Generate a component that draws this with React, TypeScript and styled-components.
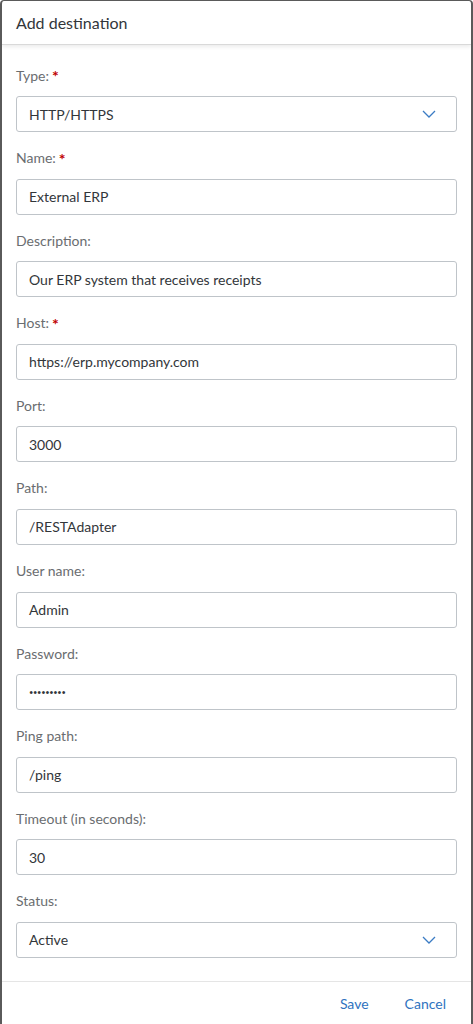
import React from 'react';
import styled, { createGlobalStyle } from 'styled-components';

const GlobalStyle = createGlobalStyle`
  html, body {
    margin: 0;
    padding: 0;
    background: #ffffff;
  }
  * {
    box-sizing: border-box;
  }
`;

const Dialog = styled.div`
  width: 473px;
  height: 1024px;
  display: flex;
  flex-direction: column;
  background: #ffffff;
  border-left: 2px solid #5a5a5a;
  border-right: 2px solid #5a5a5a;
  border-top: 1px solid #5a5a5a;
  border-radius: 4px 4px 0 0;
  font-family: Lato, "Noto Sans", sans-serif;
  color: #32363a;
  overflow: hidden;
`;

const Header = styled.div`
  height: 44px;
  flex: none;
  display: flex;
  align-items: center;
  padding: 0 14px;
  font-size: 16px;
  color: #32363a;
  border-bottom: 1px solid #d9d9d9;
  box-shadow: 0 2px 4px rgba(0, 0, 0, 0.08);
  position: relative;
  z-index: 1;
`;

const Content = styled.div`
  flex: 1;
  display: flex;
  flex-direction: column;
  gap: 14.6px;
  padding: 19px 14px 0;
`;

const Field = styled.div`
  display: flex;
  flex-direction: column;
  gap: 10px;
`;

const Label = styled.div`
  height: 22px;
  display: flex;
  align-items: center;
  font-size: 14px;
  color: #6a6d70;
`;

const Required = styled.span`
  color: #c00000;
  margin-left: 3px;
  font-size: 16px;
  font-weight: 700;
  line-height: 1;
  position: relative;
  top: 1px;
`;

const Input = styled.div`
  height: 36px;
  display: flex;
  align-items: center;
  justify-content: space-between;
  padding: 0 20px 0 12px;
  border: 1px solid #bfc4c9;
  border-radius: 3px;
  font-size: 14px;
  color: #32363a;
  background: #ffffff;
`;

const Dots = styled.span`
  font-size: 7.5px;
  letter-spacing: -0.3px;
  color: #32363a;
`;

const Footer = styled.div`
  height: 43px;
  flex: none;
  display: flex;
  align-items: center;
  justify-content: flex-end;
  gap: 36px;
  padding: 0 25px 0 0;
  border-top: 1px solid #e5e5e5;
`;

const TextButton = styled.button`
  background: none;
  border: none;
  padding: 0;
  font-family: Lato, "Noto Sans", sans-serif;
  font-size: 14px;
  color: #2f73c0;
  cursor: pointer;
`;

const Chevron = () => (
  <svg width="14" height="8" viewBox="0 0 14 8" fill="none">
    <path d="M1 1l6 6 6-6" stroke="#3b7cc4" strokeWidth="1.3" />
  </svg>
);

type FieldDef = { label: string; value: string; required?: boolean; select?: boolean; password?: boolean };

const fields: FieldDef[] = [
  { label: 'Type:', value: 'HTTP/HTTPS', required: true, select: true },
  { label: 'Name:', value: 'External ERP', required: true },
  { label: 'Description:', value: 'Our ERP system that receives receipts' },
  { label: 'Host:', value: 'https://erp.mycompany.com', required: true },
  { label: 'Port:', value: '3000' },
  { label: 'Path:', value: '/RESTAdapter' },
  { label: 'User name:', value: 'Admin' },
  { label: 'Password:', value: '•••••••••', password: true },
  { label: 'Ping path:', value: '/ping' },
  { label: 'Timeout (in seconds):', value: '30' },
  { label: 'Status:', value: 'Active', select: true },
];

const App: React.FC = () => {
  return (
    <>
      <GlobalStyle />
      <Dialog>
        <Header>Add destination</Header>
        <Content>
          {fields.map(f => (
            <Field key={f.label}>
              <Label>
                {f.label}
                {f.required && <Required>*</Required>}
              </Label>
              <Input>
                {f.password ? <Dots>{f.value}</Dots> : <span>{f.value}</span>}
                {f.select && <Chevron />}
              </Input>
            </Field>
          ))}
        </Content>
        <Footer>
          <TextButton>Save</TextButton>
          <TextButton>Cancel</TextButton>
        </Footer>
      </Dialog>
    </>
  );
};

export default App;
